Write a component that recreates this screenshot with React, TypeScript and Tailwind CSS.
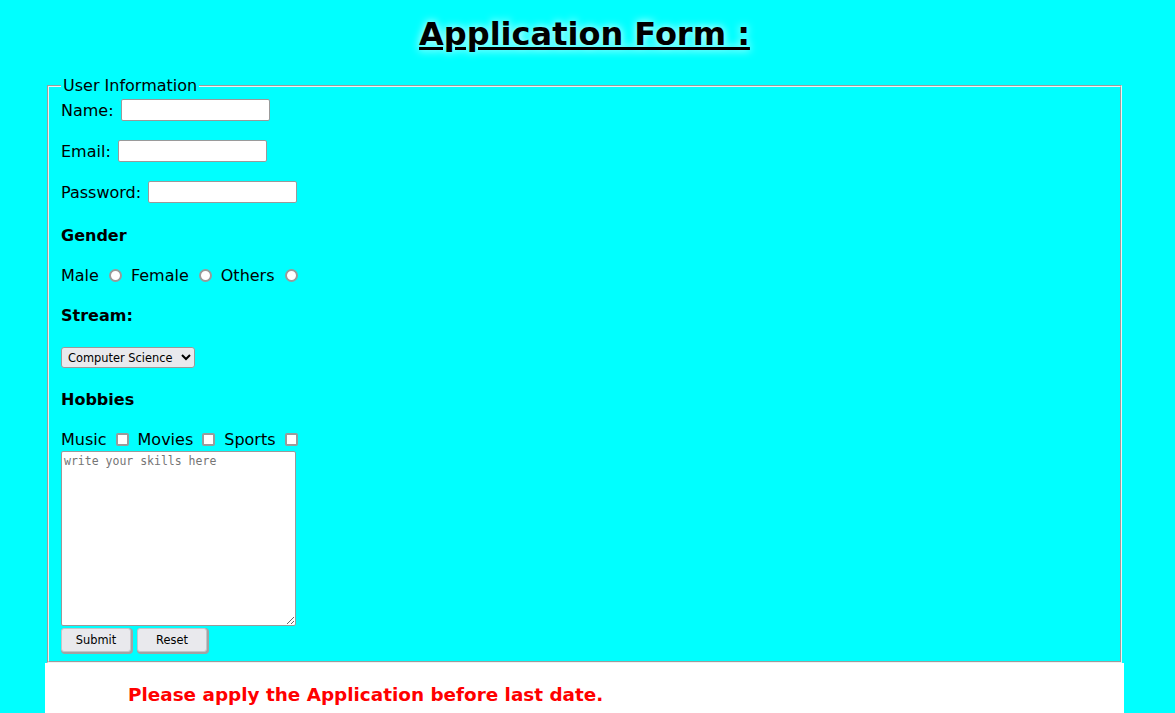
import { useState } from 'react';

export default function App() {
  const [stream, setStream] = useState('cs');

  return (
    <div className="min-h-screen bg-[#00ffff] font-['DejaVu_Sans',sans-serif] text-[16px] leading-[normal] text-black">
      <div className="ml-[45px] w-[1079px]">
        <h1 className="pt-[16px] text-center text-[32px] font-bold leading-[37px] underline [text-shadow:0_0_8px_#ffffff]">
          Application Form :
        </h1>

        <form onSubmit={(e) => e.preventDefault()}>
          <fieldset className="mx-[2px] mt-[23px] border-2 border-[#f0f0f0] px-[12px] pt-[4px] pb-[9px] [border-style:groove]">
            <legend className="px-[2px] leading-[19px]">User Information</legend>

            <div className="flex flex-col items-start">
              <div className="flex h-[22px] items-center">
                <label htmlFor="name">Name:</label>
                <input id="name" type="text" className="ml-[7px] h-[22px] w-[149px] rounded-[2px] border border-[#9a9a9a] bg-white px-[2px] text-[13px]" />
              </div>

              <div className="mt-[19px] flex h-[22px] items-center">
                <label htmlFor="email">Email:</label>
                <input id="email" type="email" className="ml-[7px] h-[22px] w-[149px] rounded-[2px] border border-[#9a9a9a] bg-white px-[2px] text-[13px]" />
              </div>

              <div className="mt-[19px] flex h-[22px] items-center">
                <label htmlFor="password">Password:</label>
                <input id="password" type="password" className="ml-[7px] h-[22px] w-[149px] rounded-[2px] border border-[#9a9a9a] bg-white px-[2px] text-[13px]" />
              </div>

              <h4 className="mt-[23px] font-bold leading-[19px]">Gender</h4>

              <div className="mt-[21px] flex h-[19px] items-center leading-[19px]">
                <span>Male</span>
                <input type="radio" name="gender" className="ml-[10px] mr-[9px] h-[13px] w-[13px] appearance-none rounded-full border-2 border-[#9a9a9a] bg-white checked:border-[4px] checked:border-[#0075ff]" />
                <span>Female</span>
                <input type="radio" name="gender" className="ml-[10px] mr-[9px] h-[13px] w-[13px] appearance-none rounded-full border-2 border-[#9a9a9a] bg-white checked:border-[4px] checked:border-[#0075ff]" />
                <span>Others</span>
                <input type="radio" name="gender" className="ml-[10px] h-[13px] w-[13px] appearance-none rounded-full border-2 border-[#9a9a9a] bg-white checked:border-[4px] checked:border-[#0075ff]" />
              </div>

              <h4 className="mt-[21px] font-bold leading-[19px]">Stream:</h4>

              <select
                value={stream}
                onChange={(e) => setStream(e.target.value)}
                className="mt-[22px] h-[21px] w-[134px] rounded-[3px] border border-[#9a9a9a] bg-[#e9e9ed] pl-[2px] text-[11.4px]"
              >
                <option value="cs">Computer Science</option>
                <option value="it">Information Technology</option>
                <option value="ec">Electronics</option>
              </select>

              <h4 className="mt-[22px] font-bold leading-[19px]">Hobbies</h4>

              <div className="mt-[21px] flex h-[19px] items-center leading-[19px]">
                <span>Music</span>
                <input type="checkbox" className="ml-[9px] mr-[9px] h-[13px] w-[13px] appearance-none rounded-[2px] border-2 border-[#9a9a9a] bg-white checked:border-[#0075ff] checked:bg-[#0075ff]" />
                <span>Movies</span>
                <input type="checkbox" className="ml-[9px] mr-[9px] h-[13px] w-[13px] appearance-none rounded-[2px] border-2 border-[#9a9a9a] bg-white checked:border-[#0075ff] checked:bg-[#0075ff]" />
                <span>Sports</span>
                <input type="checkbox" className="ml-[9px] h-[13px] w-[13px] appearance-none rounded-[2px] border-2 border-[#9a9a9a] bg-white checked:border-[#0075ff] checked:bg-[#0075ff]" />
              </div>

              <textarea
                placeholder="write your skills here"
                className="mt-[2px] h-[175px] w-[235px] resize rounded-[2px] border border-[#9a9a9a] bg-white p-[2px] font-['DejaVu_Sans_Mono',monospace] text-[11.5px] leading-[normal] placeholder:text-[#757575]"
              />

              <div className="mt-[2px] flex gap-[6px]">
                <button type="submit" className="h-[24px] w-[70px] rounded-[3px] border border-[#c4c4c8] bg-[#e9e9ed] text-[11.4px] shadow-[1px_1px_0_1px_#a3a3a3]">
                  Submit
                </button>
                <button type="reset" className="h-[24px] w-[70px] rounded-[3px] border border-[#c4c4c8] bg-[#e9e9ed] text-[11.4px] shadow-[1px_1px_0_1px_#a3a3a3]">
                  Reset
                </button>
              </div>
            </div>
          </fieldset>
        </form>

        <div className="h-[80px] bg-white pl-[83px] pt-[21px]">
          <h3 className="text-[18.4px] font-bold leading-[normal] text-[#ff0000]">
            Please apply the Application before last date.
          </h3>
        </div>
      </div>
    </div>
  );
}
